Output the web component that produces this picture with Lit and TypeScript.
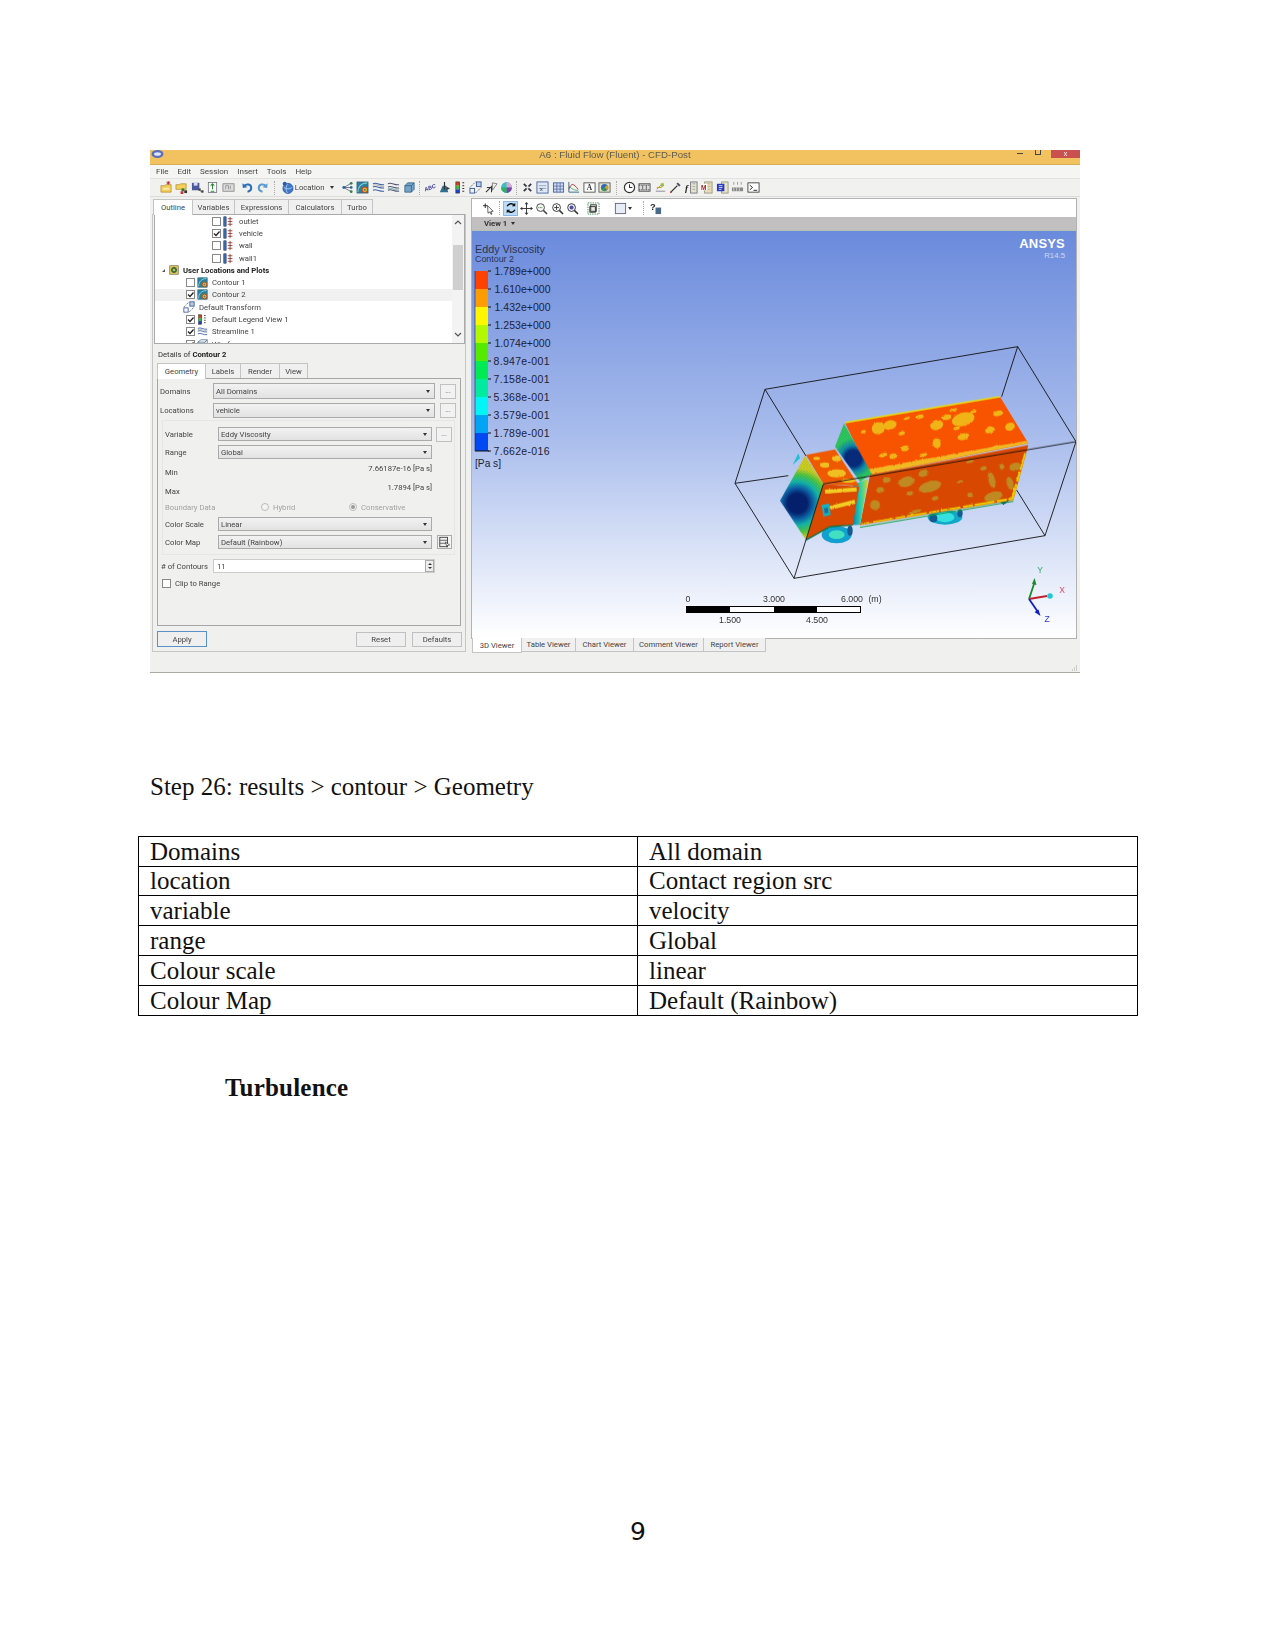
import { LitElement, html, css, svg } from "lit";
import { customElement } from "lit/decorators.js";

const ICONS: Record<string, any> = {
  folderNew: svg`<path d="M1 5h4l1-1h6v8H1z" fill="#f4cf5a" stroke="#a88420" stroke-width=".7"/><path d="M9 0v4M7 2h4M7.6.6l2.8 2.8M10.4.6 7.6 3.4" stroke="#b02020" stroke-width=".8"/><path d="M3 8h7v1H3z" fill="#fff"/>`,
  folderData: svg`<path d="M1 4h4l1-1h6v6H1z" fill="#f4cf5a" stroke="#a88420" stroke-width=".7"/><rect x="7" y="8" width="3" height="3" fill="#2a7a30"/><rect x="10" y="10" width="3" height="3" fill="#333"/><rect x="6" y="11" width="3" height="3" fill="#c33"/>`,
  saveData: svg`<rect x="1" y="2" width="8" height="8" fill="#4a5a9a"/><rect x="3" y="2" width="4" height="3" fill="#dde"/><rect x="8" y="8" width="2.5" height="2.5" fill="#444"/><rect x="11" y="10" width="2.5" height="2.5" fill="#444"/><path d="M9 10l3 2" stroke="#444" stroke-width=".7"/>`,
  report: svg`<rect x="2.5" y="1.5" width="9" height="11" fill="#fff" stroke="#667" stroke-width=".8"/><path d="M7 3v6M5 5l2-2 2 2M5 11h4" fill="none" stroke="#2a8a3a" stroke-width="1.1"/>`,
  film: svg`<rect x="1" y="3" width="12" height="8" fill="#ddd" stroke="#777" stroke-width=".8"/><path d="M4 5v4M4 5h3M7 5v4M9 5v4" stroke="#888" stroke-width=".8"/>`,
  undo: svg`<path d="M3 5.500c3-3 8-2 8 2 0 2-1.500 3.500-4 4" fill="none" stroke="#2c6fb8" stroke-width="2.200"/><path d="M1.500 2.500l.5 5 5-.8z" fill="#2c6fb8"/>`,
  redo: svg`<path d="M11 5.500c-3-3-8-2-8 2 0 2 1.500 3.500 4 4" fill="none" stroke="#5a9ad0" stroke-width="2.200"/><path d="M12.500 2.500l-.5 5-5-.8z" fill="#5a9ad0"/>`,
  ball: svg`<circle cx="7.500" cy="8" r="5.500" fill="#3f78c8" stroke="#1d4a90" stroke-width=".7"/><path d="M3 7c3 2 6 2 9 0M7 3c-2 3-2 7 0 10" fill="none" stroke="#bcd4f4" stroke-width=".8"/><circle cx="4" cy="3" r="2.200" fill="#2b5ea8"/>`,
  nodes: svg`<circle cx="3" cy="7" r="1.600" fill="#2c6fb8"/><circle cx="11" cy="2.500" r="1.500" fill="#2f8a40"/><circle cx="11" cy="7" r="1.500" fill="#2c6fb8"/><circle cx="11" cy="11.500" r="1.500" fill="#2f8a40"/><path d="M3 7 11 2.500M3 7h8M3 7l8 4.500" stroke="#456" stroke-width=".8"/>`,
  contour: svg`<rect x="1" y="1" width="12" height="12" fill="#2f7f9a" stroke="#1d4f68" stroke-width=".6"/><path d="M2 12C2 6 6 2 12 2" fill="none" stroke="#7ed0e0" stroke-width="1.200"/><circle cx="9.500" cy="9.500" r="3" fill="#e8b020" stroke="#b5401a"/><circle cx="9.500" cy="9.500" r="1" fill="#2f7f9a"/>`,
  stream: svg`<path d="M1 3c4-2 7 2 12 1M1 6.500c4-2 7 2 12 1M1 10c4-2 7 2 12 1" fill="none" stroke="#3a5fa8" stroke-width="1.100"/><path d="M1 4.700c4-2 7 2 12 1" fill="none" stroke="#999" stroke-width=".8"/>`,
  stream2: svg`<path d="M1 3c4-2 7 2 12 1M1 6.500c4-2 7 2 12 1M1 10c4-2 7 2 12 1" fill="none" stroke="#557" stroke-width="1.100"/><path d="M1 8.500c4-2 7 2 12 1" fill="none" stroke="#4a9a9a" stroke-width=".8"/>`,
  cube: svg`<path d="M2 5l3-3h7v7l-3 3H2z" fill="#76a4c8" stroke="#2a5a80" stroke-width=".8"/><path d="M2 5h7v7M9 5l3-3" fill="none" stroke="#2a5a80" stroke-width=".8"/>`,
  abc: svg`<text x="1" y="9.500" font-size="6" font-weight="700" font-style="italic" font-family="Liberation Sans" fill="#3a3a9a" transform="rotate(-20 7 7)">ABC</text>`,
  arrowObj: svg`<path d="M2 12l3-7h4l2 7z" fill="#2f6f90"/><path d="M7 1v8" stroke="#333" stroke-width="1.300"/><path d="M9 6l4 2-4 2z" fill="#444"/>`,
  legend: svg`<rect x="2" y="1" width="4" height="4" fill="#d04020"/><rect x="2" y="5" width="4" height="4" fill="#40c040"/><rect x="2" y="9" width="4" height="4" fill="#2040d0"/><rect x="2" y="1" width="4" height="12" fill="none" stroke="#333" stroke-width=".7"/><path d="M9 2h2M9 5h2M9 8h2M9 11h2" stroke="#333" stroke-width="1.100"/>`,
  transform: svg`<rect x="1" y="8" width="5" height="5" fill="none" stroke="#3a5a9a" stroke-width="1"/><rect x="8" y="1" width="5" height="5" fill="#bcd" stroke="#3a5a9a"/><path d="M1 7 7 1M7 13l6-6" stroke="#555" stroke-dasharray="1.500 1"/>`,
  clip: svg`<path d="M1 12 8 5M2 7h5v5" fill="none" stroke="#333" stroke-width="1.100"/><path d="M8 2l5 1-5 7z" fill="#eee" stroke="#666" stroke-width=".8"/>`,
  color: svg`<circle cx="7" cy="7" r="5.800" fill="#38c0c0"/><path d="M7 7V1.200A5.800 5.800 0 0 1 12.800 7z" fill="#d8a8d8"/><path d="M7 7h5.800A5.800 5.800 0 0 1 7 12.800z" fill="#8040a8"/><path d="M7 7v5.800A5.800 5.800 0 0 1 1.200 7z" fill="#30b060"/>`,
  x2: svg`<path d="M3 3l8 8M11 3l-8 8" stroke="#334" stroke-width="1.800"/><circle cx="7" cy="7" r="1.500" fill="#eee"/>`,
  fx: svg`<rect x="1" y="1" width="12" height="12" fill="#dfe8f4" stroke="#3a5a9a" stroke-width=".9"/><path d="M3 5h8M3 8h8" stroke="#9ab"/><text x="4" y="11" font-size="6.500" font-family="Liberation Sans" fill="#224">x</text>`,
  table: svg`<rect x="1.500" y="2" width="11" height="10" fill="#cfd8f0" stroke="#3a5a9a" stroke-width=".9"/><path d="M1.500 5.500h11M1.500 8.700h11M5.200 2v10M8.800 2v10" stroke="#3a5a9a" stroke-width=".7"/>`,
  chart: svg`<path d="M2 1v11h11" fill="none" stroke="#3a6a8a"/><path d="M2 9c3-8 5-6 10 0" fill="none" stroke="#c03030"/><path d="M2 5c3 4 6 5 10 5" fill="none" stroke="#30a060" stroke-width=".8"/>`,
  textA: svg`<rect x="1" y="2" width="12" height="10" fill="#fff" stroke="#444" stroke-width=".9"/><text x="4" y="10" font-size="8" font-weight="700" font-family="Liberation Serif" fill="#333">A</text>`,
  img: svg`<rect x="1" y="2" width="12" height="10" fill="#e8e0c8" stroke="#555" stroke-width=".9"/><circle cx="7" cy="7" r="3.800" fill="#2a6ac0"/><path d="M7 7l3-3a4 4 0 0 1 0 6z" fill="#d0a020"/><path d="M7 7l-3 2a4 4 0 0 0 4 2z" fill="#30a040"/>`,
  clock: svg`<circle cx="7" cy="7" r="5.500" fill="#fff" stroke="#333" stroke-width="1.300"/><path d="M7 3.500V7h3" fill="none" stroke="#333" stroke-width="1.100"/>`,
  filmB: svg`<rect x="1" y="3" width="12" height="8" fill="#ddd" stroke="#444" stroke-width=".9"/><path d="M1 4.500h12M1 9.500h12" stroke="#333" stroke-dasharray="1 1"/><path d="M5 4.500v5M9 4.500v5" stroke="#666"/>`,
  spark: svg`<path d="M2 11h10M3 9l6-6" stroke="#889" stroke-width="1"/><path d="M7 3l3-1 1 3-3 2z" fill="#9ac030"/><path d="M3 7h5" stroke="#d0a020" stroke-width="1.200"/>`,
  probe: svg`<path d="M2 12l7-7" stroke="#333" stroke-width="1.400"/><path d="M8 3l3 3 1.500-1.500-3-3z" fill="#4a4a6a"/><circle cx="2" cy="12" r="1" fill="#c04040"/>`,
  fBox: svg`<rect x="6" y="1" width="7" height="12" fill="#e4e4c8" stroke="#778"/><path d="M8 3h3M8 6h3M8 9h3" stroke="#99a" stroke-width=".8"/><text x="0" y="11" font-size="10" font-weight="700" font-style="italic" font-family="Liberation Serif" fill="#222">f</text>`,
  mBox: svg`<rect x="5" y="1" width="8" height="12" fill="#e8dcb4" stroke="#998"/><path d="M7 3h4M7 6h4M7 9h4" stroke="#aa9" stroke-width=".8"/><rect x="1" y="3" width="7" height="7" fill="#fff"/><text x="1" y="9.500" font-size="7" font-weight="700" font-family="Liberation Sans" fill="#b02020">M</text>`,
  bBox: svg`<rect x="6" y="1" width="7" height="12" fill="#e8e4c4" stroke="#998"/><rect x="1" y="3" width="8" height="8" fill="#2a3ac0"/><path d="M3 5h4M3 7h4M3 9h3" stroke="#fff" stroke-width=".8"/>`,
  bars: svg`<path d="M3 1v3M7 1v3M11 1v3" stroke="#999"/><rect x="1" y="7" width="12" height="4" fill="#888"/><path d="M3 7v4M6 7v4M9 7v4" stroke="#ddd" stroke-width=".8"/>`,
  term: svg`<rect x="1" y="2" width="12" height="10" fill="#fff" stroke="#333" stroke-width=".9"/><path d="M3 4.500 6 7l-3 2.500M7 10h4" fill="none" stroke="#222" stroke-width="1"/>`,
  select: svg`<path d="M1 4h5M3.500 1.500v5" stroke="#222" stroke-width="1"/><path d="M6 4l6 6-2.500.3 1.200 2.700-1 .4-1.200-2.700L6.500 12z" fill="#fff" stroke="#333" stroke-width=".8"/>`,
  rotate: svg`<path d="M11 4A5 5 0 0 0 2.500 5M3 10a5 5 0 0 0 8.500-1" fill="none" stroke="#111" stroke-width="1.700"/><path d="M12 1v4H8zM2 13V9h4z" fill="#111"/>`,
  pan: svg`<path d="M7 1v12M1 7h12" stroke="#333" stroke-width="1"/><path d="M7 0l2 2.500H5zM7 14l2-2.500H5zM0 7l2.500-2v4zM14 7l-2.500-2v4z" fill="#333"/>`,
  zoomBox: svg`<circle cx="6" cy="6" r="4.200" fill="#f4f4f4" stroke="#444"/><path d="M9 9l4 4" stroke="#444" stroke-width="1.600"/><path d="M3.500 6H8" stroke="#3a7a3a" stroke-dasharray="1 .7"/>`,
  zoomIn: svg`<circle cx="6" cy="6" r="4.200" fill="#fff" stroke="#333"/><path d="M9 9l4 4" stroke="#333" stroke-width="1.600"/><path d="M3.500 6h5M6 3.500v5" stroke="#333"/>`,
  zoomFit: svg`<circle cx="6" cy="6" r="4.200" fill="#eef" stroke="#333"/><path d="M9 9l4 4" stroke="#333" stroke-width="1.600"/><circle cx="6" cy="6" r="2.200" fill="#5050a0"/>`,
  fitBox: svg`<rect x="1" y="1" width="12" height="12" fill="none" stroke="#3a8a4a" stroke-dasharray="1.500 1"/><rect x="4" y="3" width="6" height="7" fill="#e8e8e8" stroke="#333"/><rect x="3" y="5" width="6" height="6" fill="none" stroke="#333"/>`,
  square: svg`<rect x="1.500" y="1.500" width="11" height="11" fill="#e8ecf8" stroke="#667"/>`,
  help: svg`<text x="1" y="9" font-size="10" font-weight="700" font-family="Liberation Sans" fill="#222">?</text><rect x="7" y="6" width="6" height="7" fill="#4a6a8a"/>`,
  bc: svg`<rect x="1" y="1" width="3" height="12" fill="#3a6ab0" stroke="#123" stroke-width=".6"/><path d="M9 1v12M6 3.500h6M6 7h6M6 10.500h6" stroke="#8a2a2a" stroke-width="1"/>`,
  userLoc: svg`<rect x="1" y="1" width="12" height="12" fill="#d8c050" stroke="#665" stroke-width=".8"/><circle cx="7" cy="7" r="3.500" fill="#4a8a40" stroke="#234"/><circle cx="7" cy="7" r="1.300" fill="#e0e060"/>`,
  wire: svg`<path d="M1 12V4l4-3h8v8l-3 3z" fill="none" stroke="#4a6a8a"/><path d="M1 4h9v8M10 4l3-3" fill="none" stroke="#4a6a8a"/>`,
  colormap: svg`<rect x="1.500" y="1.500" width="9" height="11" fill="#eee" stroke="#333"/><path d="M1.500 5h9M1.500 8.500h9" stroke="#555"/><path d="M8 7l5 3.500-2.500.4L10 13z" fill="#fff" stroke="#222" stroke-width=".7"/>`,
};

const ic = (n: string) => html`<svg class="ic" viewBox="0 0 14 14">${ICONS[n]}</svg>`;
const cell = (n: string) => html`<span class="cell">${ic(n)}</span>`;

const TREE = [
  { lv: "l2", cb: false, icon: "bc", text: "outlet" },
  { lv: "l2", cb: true, icon: "bc", text: "vehicle" },
  { lv: "l2", cb: false, icon: "bc", text: "wall" },
  { lv: "l2", cb: false, icon: "bc", text: "wall1" },
  { lv: "l0", cb: null, icon: "userLoc", text: "User Locations and Plots", bold: true },
  { lv: "l1", cb: false, icon: "contour", text: "Contour 1" },
  { lv: "l1", cb: true, icon: "contour", text: "Contour 2", sel: true },
  { lv: "lt", cb: null, icon: "transform", text: "Default Transform" },
  { lv: "l1", cb: true, icon: "legend", text: "Default Legend View 1" },
  { lv: "l1", cb: true, icon: "stream", text: "Streamline 1" },
  { lv: "l1", cb: true, icon: "wire", text: "Wireframe" },
];

const LEGEND = [
  ["1.789e+000", "#ff4200"], ["1.610e+000", "#ff9c00"], ["1.432e+000", "#fff600"], ["1.253e+000", "#b4f800"],
  ["1.074e+000", "#55ea00"], ["8.947e-001", "#00ea55"], ["7.158e-001", "#00eaa0"], ["5.368e-001", "#00f6f6"],
  ["3.579e-001", "#00a4f4"], ["1.789e-001", "#0048f4"], ["7.662e-016", ""],
];

const ROWS = [
  ["Domains", "All domain", 30], ["location", "Contact region src", 29], ["variable", "velocity", 30],
  ["range", "Global", 30], ["Colour scale", "linear", 30], ["Colour Map", "Default (Rainbow)", 30],
];

const TOP_BLOTS = [[475,295,20,18],[510,285,20,14],[430,305,8,5],[545,310,10,6],[555,355,12,8],[490,375,12,6],[520,378,12,8],[650,285,20,15],[680,262,15,8],[730,268,35,20],[650,340,12,15],[730,320,18,10],[710,295,10,5],[835,250,15,8],[810,300,15,10],[870,290,15,12],[830,350,12,5],[600,260,12,6],[560,265,10,4],[760,245,10,4],[700,240,12,4],[610,375,12,5]];
const SIDE_BLOTS = [[560,455,25,15],[630,470,35,16],[610,430,15,10],[500,450,12,8],[480,480,12,8],[465,525,15,15],[570,490,10,6],[645,505,10,6],[750,495,8,8],[720,455,10,4],[790,415,10,6],[845,410,8,8],[815,450,10,25],[885,410,18,12],[820,500,28,15],[870,460,10,20],[750,395,12,4],[585,545,20,5]];

@customElement("app-root")
export class AppRoot extends LitElement {
  static styles = css`
    :host { display: block; height: 1650px; background: #fff; font-family: "Liberation Serif", serif; color: #111; overflow: hidden; }
    .shot { width: 930px; height: 523px; margin: 150px 0 0 150px; background: #f0f0ee; border-bottom: 1px solid #a9a99f; box-sizing: border-box; font: 7.700px Roboto, "Liberation Sans", sans-serif; color: #444; filter: blur(0.4px); }
    .ic { width: 13px; height: 13px; display: block; flex: none; }
    .title { height: 15px; background: #f2c261; border-bottom: 1px solid #d8ad55; box-sizing: border-box; display: grid; grid-template-columns: 1fr auto 1fr; font: 9.700px "Liberation Sans", sans-serif; color: #5c5c50; }
    .title .logo { padding-left: 1px; }
    .title .logo svg { width: 13px; height: 9px; display: block; }
    .title .cap { line-height: 10px; }
    .winbtns { display: flex; justify-content: flex-end; }
    .min { width: 6px; height: 1px; background: #444; margin: 3px 12px 0 0; }
    .max { width: 6px; height: 5px; border: 1px solid #444; border-top: 0; margin-right: 10px; box-sizing: border-box; }
    .close { width: 29px; height: 8px; background: #c9504f; color: #fff; text-align: center; font-size: 7px; line-height: 7px; }
    .menu { height: 13px; background: #f5f6f4; display: flex; gap: 9px; padding-left: 6px; align-items: center; font-size: 8px; color: #444; }
    .tools { height: 19px; background: #f1f1ef; border-top: 1px solid #e2e2e0; border-bottom: 1px solid #dcdcda; box-sizing: border-box; display: flex; align-items: center; padding-left: 8.250px; }
    .cell { width: 15.500px; flex: none; display: flex; justify-content: center; }
    .g { display: flex; align-items: center; }
    .gap35 { margin-left: 3.500px; }
    .sep { width: 1px; height: 14px; flex: none; border-left: 1px dotted #aaa; box-sizing: border-box; }
    .s9 { margin: 0 4px; }
    .s45 { margin: 0 1.750px; }
    .s5 { margin: 0 2px; }
    .loc { width: 44.500px; flex: none; display: flex; justify-content: space-between; padding-right: 5px; box-sizing: border-box; align-items: center; }
    .drop { width: 0; height: 0; border: 2.500px solid transparent; border-top: 3px solid #333; border-bottom: 0; flex: none; }
    .main { display: flex; gap: 6px; padding: 2px 0 0 2px; }
    .left { width: 314px; flex: none; }
    .tabs { display: flex; }
    .tab { height: 15px; box-sizing: border-box; display: flex; align-items: center; justify-content: center; background: #f0f0f0; border: 1px solid #c4c4c4; border-left: 0; border-bottom: 0; color: #444; }
    .tab.on { background: #fff; border-left: 1px solid #c4c4c4; position: relative; height: 16px; z-index: 1; margin-bottom: -1px; }
    .t1 { padding-left: 1px; }
    .leftbox { height: 438px; border: 1px solid #c6c6c6; box-sizing: border-box; border-top: 0; }
    .tree { height: 130px; margin: 0 0 0 1px; width: 311px; background: #fff; border: 1px solid #aaa; box-sizing: border-box; display: flex; overflow: hidden; margin-top: 0; }
    .list { flex: 1; min-width: 0; }
    .row { height: 12.300px; display: flex; align-items: center; white-space: nowrap; }
    .row.sel { background: #f1f1f1; }
    .l2 { padding-left: 57px; }
    .l1 { padding-left: 31px; }
    .lt { padding-left: 28px; }
    .l0 { padding-left: 5px; }
    .row .ic { width: 11px; height: 11px; margin: 0 4px 0 2px; }
    .l2 .ic { margin-right: 5px; }
    .lt .ic { margin: 0 4px 0 0; width: 12px; height: 12px; }
    .row.l0 .ic { margin: 0 4px; width: 10px; height: 10px; }
    .row b { color: #222; }
    .cb { width: 9px; height: 9px; background: #fff; border: 1px solid #888; box-sizing: border-box; flex: none; position: relative; }
    .cb svg { width: 9px; height: 9px; display: block; margin: -1px; }
    .caret { width: 0; height: 0; border-left: 3px solid transparent; border-bottom: 3px solid #555; flex: none; margin-left: 2px; }
    .sb { width: 12px; flex: none; background: #f3f3f3; display: flex; flex-direction: column; align-items: center; }
    .sb svg { width: 8px; height: 5px; margin-top: 5px; flex: none; }
    .thumb { width: 10px; height: 45px; background: #cfcfcf; margin-top: 20px; flex: none; }
    .sb .down { margin-top: 42px; }
    .details { padding: 0 4px; }
    .dh { height: 19px; padding: 6px 0 0 1px; box-sizing: border-box; line-height: 10px; color: #333; }
    .dh b { color: #222; }
    .panel { height: 248px; border: 1px solid #a6a6a6; box-sizing: border-box; background: #f0f0ee; padding-left: 2px; width: 304px; }
    .fr { display: flex; align-items: center; height: 15px; margin-top: 4px; }
    .fr.first { height: 16px; margin-top: 4px; }
    .lab { width: 53px; flex: none; }
    .sel2 { height: 100%; flex: none; border: 1px solid #aaa; box-sizing: border-box; background: linear-gradient(#f2f2f2, #e2e2e2); display: flex; align-items: center; justify-content: space-between; padding: 0 4px 0 2px; width: 222px; }
    .sel2.n { width: 214px; }
    .btn3 { width: 16px; height: 15px; margin-left: 5px; border: 1px solid #c0c0c0; box-sizing: border-box; background: #f2f2f2; font-size: 7px; line-height: 12px; text-align: center; color: #666; flex: none; }
    .n + .btn3 { margin-left: 4px; }
    .group { margin: 2px 0 0 2px; width: 293px; height: 135px; border: 1px solid #e6e6e4; box-sizing: border-box; padding: 2px 0 0 2px; }
    .group .lab { width: 53px; }
    .group .fr.h14 { height: 14px; }
    .mm { height: 19px; display: flex; align-items: center; justify-content: space-between; width: 267px; }
    .mm.top { margin-top: 4px; }
    .mm span + span { margin-bottom: 8px; }
    .bd { height: 12px; display: flex; align-items: center; color: #a2a2a2; margin-top: 0; }
    .bd .a { width: 96px; flex: none; }
    .bd .r { width: 8px; height: 8px; border: 1px solid #bbb; border-radius: 50%; box-sizing: border-box; margin-right: 4px; flex: none; background: #f4f4f4; display: flex; align-items: center; justify-content: center; }
    .bd .r i { width: 4px; height: 4px; background: #999; border-radius: 50%; display: block; }
    .bd .b { width: 88px; display: flex; align-items: center; }
    .map { margin-left: 5px; width: 15px; height: 14px; border: 1px solid #aaa; box-sizing: border-box; background: #f4f4f4; flex: none; }
    .map .ic { width: 13px; height: 12px; }
    .cnt { display: flex; align-items: center; height: 14px; margin-top: 4px; }
    .cnt .lab { width: 53px; padding-left: 1px; box-sizing: border-box; }
    .inp { width: 222px; height: 14px; background: #fff; border: 1px solid #ccc; box-sizing: border-box; display: flex; align-items: center; justify-content: space-between; padding-left: 3px; }
    .spin { width: 9px; height: 12px; border: 1px solid #aaa; box-sizing: border-box; margin-right: 0; display: flex; flex-direction: column; align-items: center; justify-content: space-evenly; background: #eee; }
    .spin i { width: 0; height: 0; border: 2px solid transparent; display: block; }
    .spin i:first-child { border-bottom: 2px solid #333; border-top: 0; }
    .spin i:last-child { border-top: 2px solid #333; border-bottom: 0; }
    .clip { display: flex; align-items: center; gap: 4px; height: 12px; margin: 4px 0 0 2px; }
    .clip .cb { width: 9px; height: 9px; }
    .acts { display: flex; margin-top: 5px; height: 16px; align-items: center; padding-left: 0; }
    .pb { width: 50px; height: 15px; border: 1px solid #c0c0c0; box-sizing: border-box; background: #efefef; display: flex; align-items: center; justify-content: center; flex: none; }
    .pb.apply { height: 16px; border-color: #5a90c8; margin-right: 149px; }
    .pb + .pb { margin-right: 6px; }
    .right { width: 604px; flex: none; }
    .frame { box-shadow: 0 0 0 1px #b2b2b2; width: 604px; }
    .vt { height: 18px; background: #fff; display: flex; align-items: center; padding-left: 8.250px; }
    .vt .hi { width: 15.500px; height: 15px; background: #bcdcf8; border: 1px solid #88b8e8; box-sizing: border-box; display: flex; justify-content: center; align-items: center; flex: none; }
    .vt .hi .ic { width: 12px; height: 12px; }
    .gap4 { margin-left: 5.500px; }
    .gap10 { margin-left: 11.500px; }
    .gap3 { margin: 0 3px; }
    .gap9 { margin: 0 3px 0 11px; }
    .strip { height: 14px; background: #c1bfbf; display: flex; align-items: center; gap: 4px; padding-left: 12px; font-weight: 700; color: #333; border-bottom: 1px solid #b4c2b4; box-sizing: border-box; }
    .view { width: 604px; height: 407px; display: block; }
    .view text { font-family: "Liberation Sans", sans-serif; }
    .vtabs { display: flex; height: 14px; }
    .vtabs .tab { height: 14px; border: 1px solid #c4c4c4; border-left: 0; border-top: 0; background: #f0f0f0; }
    .vtabs .tab.on { background: #fff; height: 15px; margin: 0; border-left: 1px solid #c4c4c4; }
    .status { height: 20px; display: flex; justify-content: flex-end; align-items: flex-end; padding-right: 2px; }
    .status svg { width: 8px; height: 8px; display: block; }
    .step { font-size: 25px; line-height: 29px; margin: 99px 0 35px 150px; height: 29px; }
    table { border-collapse: collapse; margin-left: 138px; width: 1000px; table-layout: fixed; font-size: 25px; }
    td { border: 1px solid #000; padding: 0 0 1px 11px; line-height: 27px; vertical-align: bottom; white-space: nowrap; overflow: hidden; }
    td:first-child { width: 487px; }
    .turb { font-size: 25px; font-weight: 700; line-height: 29px; margin: 57px 0 0 225px; letter-spacing: .2px; }
    .pg { font: 25px/29px "DejaVu Sans", sans-serif; margin-top: 415px; text-align: center; width: 1276px; }
  `;

  private check() {
    return html`<svg viewBox="0 0 9 9"><path d="M2 4.500l2 2 3.500-4" fill="none" stroke="#222" stroke-width="1.300"/></svg>`;
  }

  private sel(t: string, narrow = false) {
    return html`<div class="sel2 ${narrow ? "n" : ""}"><span>${t}</span><span class="drop"></span></div>`;
  }

  private tree() {
    return TREE.map(
      (r: any) => html`<div class="row ${r.lv} ${r.sel ? "sel" : ""}">
        ${r.cb === null ? (r.bold ? html`<span class="caret"></span>` : "") : html`<span class="cb">${r.cb ? this.check() : ""}</span>`}
        ${ic(r.icon)}${r.bold ? html`<b>${r.text}</b>` : html`<span>${r.text}</span>`}
      </div>`
    );
  }

  private truck() {
    const blot = (b: number[]) => svg`<ellipse cx=${b[0]} cy=${b[1]} rx=${b[2]} ry=${b[3]} transform="rotate(-15 ${b[0]} ${b[1]})"/>`;
    return svg`
      <g transform="translate(720 330) scale(.33333)" fill="none" stroke="#111" stroke-width="2.700">
        <path d="M135 178 893 50 1068 335M135 178 45 460 222 745 975 617 1068 335M45 460 205 437M135 178 258 378M893 50 845 200M975 617 890 480"/>
        <g stroke="none">
          <ellipse cx="675" cy="562" rx="52" ry="22" fill="#14a8c8"/><ellipse cx="675" cy="562" rx="28" ry="15" fill="#35e0e0"/><ellipse cx="640" cy="565" rx="12" ry="12" fill="#155a90"/><ellipse cx="720" cy="550" rx="8" ry="12" fill="#155a90"/>
          <ellipse cx="350" cy="614" rx="45" ry="26" fill="#12a0d0"/><ellipse cx="350" cy="614" rx="24" ry="13" fill="#40e0c0"/><ellipse cx="390" cy="602" rx="8" ry="15" fill="#155a90"/>
          <path d="M840 515 878 505 850 525z" fill="#124a80"/>
          <path d="M218 405 235 370 240 385z" fill="#20c0d0"/>
          <polygon points="375,278 840,200 925,340 450,435" fill="#f85400"/>
          <g clip-path="url(#clipTop)"><g fill="#f0b414" filter="url(#rough)">${TOP_BLOTS.map(blot)}</g>
            <g filter="url(#rough)"><path d="M452 425 925 340" fill="none" stroke="#f0b820" stroke-width="17" stroke-linecap="round" stroke-dasharray="16 8 34 6 10 12 26 7"/></g>
          </g>
          <polygon points="450,435 925,345 880,510 420,585" fill="#d94800"/>
          <g clip-path="url(#clipSide)"><g fill="#c08a20" filter="url(#rough)">${SIDE_BLOTS.map(blot)}</g>
            <g filter="url(#rough)"><path d="M425 585 878 508 918 370" fill="none" stroke="#e8c800" stroke-width="11" stroke-dasharray="30 5 60 8"/></g>
          </g>
          <path d="M420 592 880 514" fill="none" stroke="#10a040" stroke-width="3"/>
          <path d="M375 278 840 200" fill="none" stroke="#e8e000" stroke-width="5"/>
          <polygon points="345,350 372,280 455,432 420,455" fill="url(#mid)"/>
          <polygon points="345,350 372,280 455,432 420,455" fill="url(#mesh)"/>
          <polygon points="400,465 445,445 420,585 395,585" fill="url(#strip)"/>
          <polygon points="258,375 345,358 418,468 310,462" fill="#ef5a00"/>
          <g fill="#f0c020" filter="url(#rough)"><ellipse cx="315" cy="405" rx="15" ry="8"/><ellipse cx="350" cy="385" rx="14" ry="9"/><ellipse cx="350" cy="430" rx="28" ry="12"/><ellipse cx="385" cy="452" rx="22" ry="6"/><ellipse cx="290" cy="385" rx="10" ry="5"/></g>
          <polygon points="310,462 418,470 398,585 330,590 258,630" fill="#d94a00"/>
          <path d="M315 485 410 478M325 535 405 515" stroke="#f2cc20" stroke-width="12" filter="url(#rough)"/>
          <path d="M305 525 328 520 332 555 310 560z" fill="#18b0c0"/><path d="M312 535 323 532 325 548 314 550z" fill="#1870a0"/>
          <path d="M258 630 330 590 398 585" stroke="#0a7040" stroke-width="4"/>
          <polygon points="180,512 255,378 310,462 258,630" fill="url(#front)"/>
          <polygon points="180,512 255,378 310,462 258,630" fill="url(#mesh)"/>
        </g>
        <path d="M1068 335 310 462 222 745"/>
      </g>`;
  }

  private viewer() {
    return html`<svg class="view" viewBox="472 231 604 407">
      <defs>
        <linearGradient id="bg" x1="0" y1="0" x2="0" y2="1"><stop offset="0" stop-color="#6a8adc"/><stop offset=".5" stop-color="#a8bcec"/><stop offset="1" stop-color="#ffffff"/></linearGradient>
        <radialGradient id="front" gradientUnits="userSpaceOnUse" cx="232" cy="520" r="105"><stop offset=".28" stop-color="#031f70"/><stop offset=".45" stop-color="#0b68b0"/><stop offset=".62" stop-color="#12c0b0"/><stop offset=".82" stop-color="#50d040"/><stop offset="1" stop-color="#d8d820"/></radialGradient>
        <radialGradient id="mid" gradientUnits="userSpaceOnUse" cx="400" cy="385" r="60"><stop offset=".4" stop-color="#052a80"/><stop offset=".65" stop-color="#1090b0"/><stop offset="1" stop-color="#30d060"/></radialGradient>
        <linearGradient id="strip" x1="0" y1="0" x2="1" y2="0"><stop offset="0" stop-color="#1070b0"/><stop offset=".5" stop-color="#20d0b0"/><stop offset="1" stop-color="#d8d820"/></linearGradient>
        <pattern id="mesh" width="9" height="9" patternUnits="userSpaceOnUse"><path d="M0 0 9 9M9 0 0 9" stroke="#103040" stroke-width=".9" opacity=".5"/></pattern>
        <filter id="rough" x="-10%" y="-10%" width="120%" height="120%"><feTurbulence type="fractalNoise" baseFrequency=".12" numOctaves="2" seed="4"/><feDisplacementMap in="SourceGraphic" scale="7" xChannelSelector="R" yChannelSelector="G"/></filter>
        <clipPath id="clipTop"><polygon points="375,278 840,200 925,340 450,435"/></clipPath>
        <clipPath id="clipSide"><polygon points="450,435 925,345 880,510 420,585"/></clipPath>
      </defs>
      <rect x="472" y="231" width="604" height="407" fill="url(#bg)"/>
      <text x="475" y="253" font-size="10.800" fill="#2d3450">Eddy Viscosity</text>
      <text x="475" y="262" font-size="8.900" fill="#2d3450">Contour 2</text>
      ${LEGEND.map((l, i) => svg`
        ${l[1] ? svg`<rect x="475" y=${271 + i * 18} width="13" height="18" fill=${l[1]}/>` : ""}
        <path d="M488 ${271 + i * 18}h3" stroke="#111"/>
        <text x=${i < 5 ? 494.5 : 493.5} y=${275 + i * 18} font-size="10.500" fill="#1c2236" textLength="56">${l[0]}</text>`)}
      <path d="M475 451h14" stroke="#111"/><path d="M475 271v180" stroke="#223" stroke-width=".6"/>
      <text x="475" y="467" font-size="10.200" fill="#1c2236">[Pa s]</text>
      <text x="1065" y="248" text-anchor="end" font-size="13" font-weight="700" fill="#fff" style="letter-spacing:.2px">ANSYS</text>
      <text x="1065" y="258" text-anchor="end" font-size="7.800" fill="#ced9f4">R14.5</text>
      ${this.truck()}
      <rect x="686.500" y="606.500" width="174" height="6" fill="#fff" stroke="#000"/>
      <rect x="686" y="606" width="44" height="7" fill="#000"/><rect x="774" y="606" width="43" height="7" fill="#000"/>
      <g font-size="8.800" fill="#333" text-anchor="middle">
        <text x="688" y="602">0</text><text x="774" y="602">3.000</text><text x="852" y="602">6.000</text><text x="875" y="602">(m)</text>
        <text x="730" y="623">1.500</text><text x="817" y="623">4.500</text>
      </g>
      <path d="M1029 599 1034 584" stroke="#1a8a2a" stroke-width="1.800"/><path d="M1034.500 578l2 7-4.500-1z" fill="#1a8a2a"/>
      <path d="M1029 599 1047 596" stroke="#c02030" stroke-width="1.800"/><circle cx="1050" cy="596" r="2.800" fill="#20c8d8"/>
      <path d="M1029 599 1038 612" stroke="#1020c0" stroke-width="1.800"/><path d="M1040.500 616l-6-4 4-2.500z" fill="#1020c0"/>
      <g font-size="8.500" text-anchor="middle">
        <text x="1040" y="573" fill="#30a860">Y</text><text x="1062" y="593" fill="#e04860">X</text><text x="1047" y="622" fill="#3038d0">Z</text>
      </g>
    </svg>`;
  }

  render() {
    return html`
      <div class="shot">
        <div class="title">
          <div class="logo"><svg viewBox="0 0 13 9"><ellipse cx="6.500" cy="4" rx="6" ry="4" fill="#5a6ec0"/><ellipse cx="6.500" cy="4" rx="3.500" ry="1.800" fill="#dfe4f6"/></svg></div>
          <div class="cap">A6 : Fluid Flow (Fluent) - CFD-Post</div>
          <div class="winbtns"><span class="min"></span><span class="max"></span><span class="close">x</span></div>
        </div>
        <div class="menu"><span>File</span><span>Edit</span><span>Session</span><span>Insert</span><span>Tools</span><span>Help</span></div>
        <div class="tools">
          <div class="g">${["folderNew", "folderData", "saveData", "report", "film"].map(cell)}</div>
          <div class="g gap35">${["undo", "redo"].map(cell)}</div>
          <span class="sep s9"></span>
          ${cell("ball")}
          <div class="loc"><span>Location</span><span class="drop"></span></div>
          <div class="g">${["nodes", "contour", "stream", "stream2", "cube"].map(cell)}</div>
          <span class="sep s45"></span>
          <div class="g">${["abc", "arrowObj", "legend", "transform", "clip", "color"].map(cell)}</div>
          <span class="sep s5"></span>
          <div class="g">${["x2", "fx", "table", "chart", "textA", "img"].map(cell)}</div>
          <span class="sep s9"></span>
          <div class="g">${["clock", "filmB", "spark", "probe", "fBox", "mBox", "bBox", "bars", "term"].map(cell)}</div>
        </div>
        <div class="main">
          <div class="left">
            <div class="tabs t1">
              ${[["Outline", 40], ["Variables", 42], ["Expressions", 54], ["Calculators", 53], ["Turbo", 31]].map(
                (t, i) => html`<div class="tab ${i ? "" : "on"}" style="width:${t[1]}px">${t[0]}</div>`
              )}
            </div>
            <div class="leftbox">
              <div class="tree">
                <div class="list">${this.tree()}</div>
                <div class="sb">
                  <svg viewBox="0 0 8 5"><path d="M1 4l3-3 3 3" fill="none" stroke="#555" stroke-width="1.200"/></svg>
                  <div class="thumb"></div>
                  <svg class="down" viewBox="0 0 8 5"><path d="M1 1l3 3 3-3" fill="none" stroke="#555" stroke-width="1.200"/></svg>
                </div>
              </div>
              <div class="details">
                <div class="dh">Details of <b>Contour 2</b></div>
                <div class="tabs">
                  ${[["Geometry", 49], ["Labels", 35], ["Render", 39], ["View", 28]].map(
                    (t, i) => html`<div class="tab ${i ? "" : "on"}" style="width:${t[1]}px">${t[0]}</div>`
                  )}
                </div>
                <div class="panel">
                  <div class="fr first"><span class="lab">Domains</span>${this.sel("All Domains")}<span class="btn3">...</span></div>
                  <div class="fr"><span class="lab">Locations</span>${this.sel("vehicle")}<span class="btn3">...</span></div>
                  <div class="group">
                    <div class="fr h14"><span class="lab">Variable</span>${this.sel("Eddy Viscosity", true)}<span class="btn3">...</span></div>
                    <div class="fr h14"><span class="lab">Range</span>${this.sel("Global", true)}</div>
                    <div class="mm top"><span>Min</span><span>7.66187e-16 [Pa s]</span></div>
                    <div class="mm"><span>Max</span><span>1.7894 [Pa s]</span></div>
                    <div class="bd"><span class="a">Boundary Data</span><span class="b"><span class="r"></span>Hybrid</span><span class="r"><i></i></span>Conservative</div>
                    <div class="fr h14"><span class="lab">Color Scale</span>${this.sel("Linear", true)}</div>
                    <div class="fr h14"><span class="lab">Color Map</span>${this.sel("Default (Rainbow)", true)}<span class="map">${ic("colormap")}</span></div>
                  </div>
                  <div class="cnt"><span class="lab"># of Contours</span><div class="inp"><span>11</span><span class="spin"><i></i><i></i></span></div></div>
                  <div class="clip"><span class="cb"></span><span>Clip to Range</span></div>
                </div>
                <div class="acts">
                  <span class="pb apply">Apply</span><span class="pb">Reset</span><span class="pb">Defaults</span>
                </div>
              </div>
            </div>
          </div>
          <div class="right">
            <div class="frame">
              <div class="vt">
                ${cell("select")}<span class="sep gap3"></span>
                <span class="hi">${ic("rotate")}</span>
                ${["pan", "zoomBox", "zoomIn", "zoomFit"].map(cell)}
                <span class="gap4"></span>${cell("fitBox")}
                <span class="gap10"></span>${cell("square")}<span class="drop"></span>
                <span class="sep gap9"></span>${cell("help")}
              </div>
              <div class="strip"><span>View 1</span><span class="drop"></span></div>
              ${this.viewer()}
            </div>
            <div class="vtabs">
              ${[["3D Viewer", 50], ["Table Viewer", 54], ["Chart Viewer", 58], ["Comment Viewer", 70], ["Report Viewer", 62]].map(
                (t, i) => html`<div class="tab ${i ? "" : "on"}" style="width:${t[1]}px">${t[0]}</div>`
              )}
            </div>
          </div>
        </div>
        <div class="status"><svg viewBox="0 0 8 8"><path d="M6 2h1M4 4h1M6 4h1M2 6h1M4 6h1M6 6h1" stroke="#aaa"/></svg></div>
      </div>
      <div class="step">Step 26: results &gt; contour &gt; Geometry</div>
      <table>
        ${ROWS.map((r) => html`<tr style="height:${r[2]}px"><td>${r[0]}</td><td>${r[1]}</td></tr>`)}
      </table>
      <div class="turb">Turbulence</div>
      <div class="pg">9</div>
    `;
  }
}
